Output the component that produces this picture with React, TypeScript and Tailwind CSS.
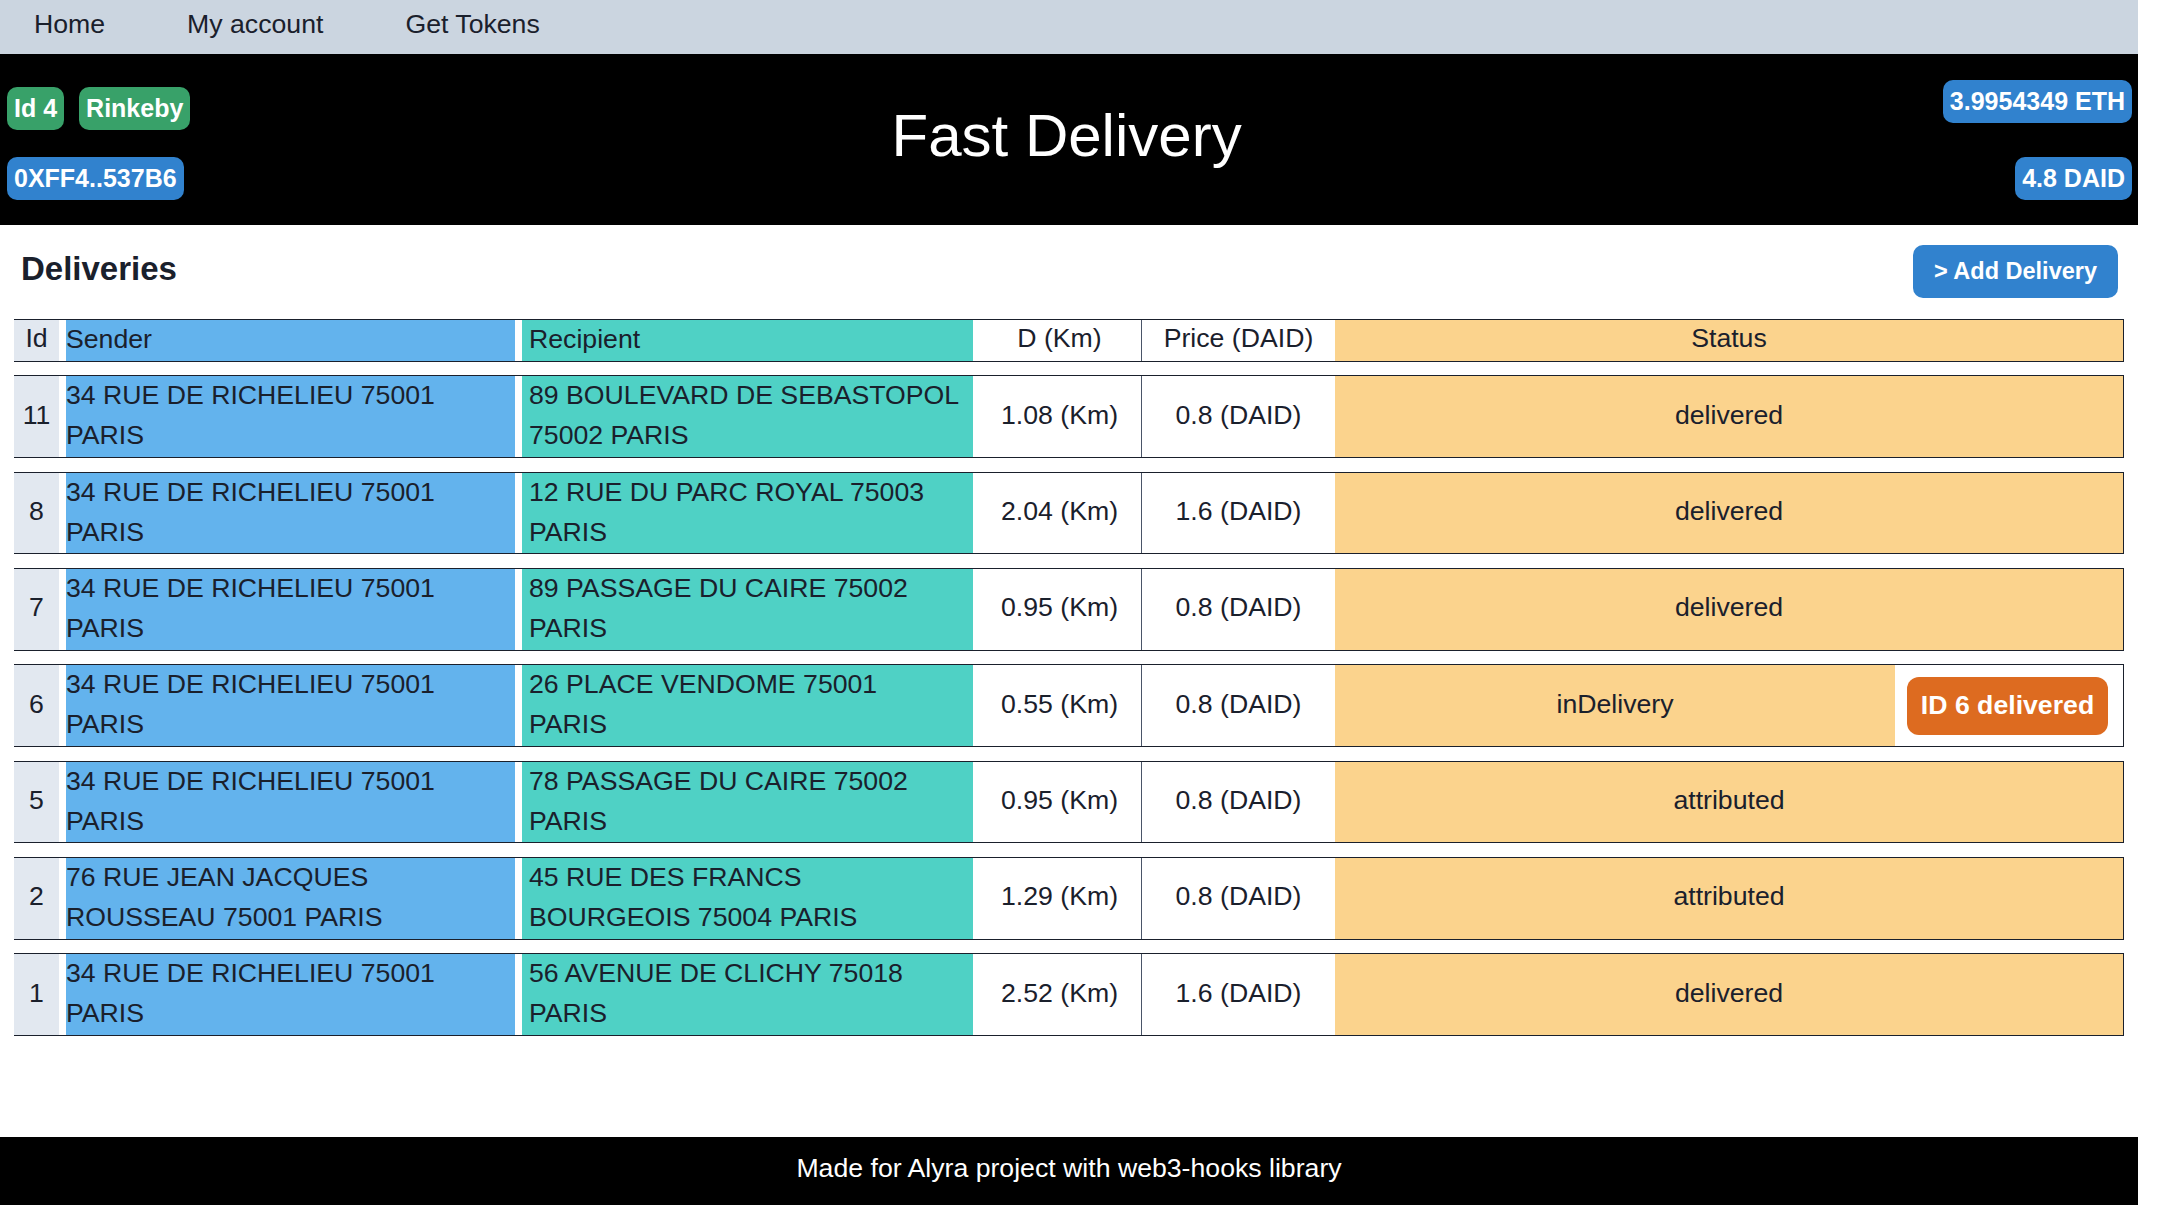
import React from 'react';

type Delivery = {
  id: number;
  sender: string[];
  recipient: string[];
  distance: string;
  price: string;
  status: string;
  action?: string;
};

const RICHELIEU = ['34 RUE DE RICHELIEU 75001', 'PARIS'];

const deliveries: Delivery[] = [
  { id: 11, sender: RICHELIEU, recipient: ['89 BOULEVARD DE SEBASTOPOL', '75002 PARIS'], distance: '1.08', price: '0.8', status: 'delivered' },
  { id: 8, sender: RICHELIEU, recipient: ['12 RUE DU PARC ROYAL 75003', 'PARIS'], distance: '2.04', price: '1.6', status: 'delivered' },
  { id: 7, sender: RICHELIEU, recipient: ['89 PASSAGE DU CAIRE 75002', 'PARIS'], distance: '0.95', price: '0.8', status: 'delivered' },
  { id: 6, sender: RICHELIEU, recipient: ['26 PLACE VENDOME 75001', 'PARIS'], distance: '0.55', price: '0.8', status: 'inDelivery', action: 'ID 6 delivered' },
  { id: 5, sender: RICHELIEU, recipient: ['78 PASSAGE DU CAIRE 75002', 'PARIS'], distance: '0.95', price: '0.8', status: 'attributed' },
  { id: 2, sender: ['76 RUE JEAN JACQUES', 'ROUSSEAU 75001 PARIS'], recipient: ['45 RUE DES FRANCS', 'BOURGEOIS 75004 PARIS'], distance: '1.29', price: '0.8', status: 'attributed' },
  { id: 1, sender: RICHELIEU, recipient: ['56 AVENUE DE CLICHY 75018', 'PARIS'], distance: '2.52', price: '1.6', status: 'delivered' },
];

const Badge = ({ children, color }: { children: React.ReactNode; color: 'green' | 'blue' }) => (
  <span
    className={
      'inline-flex h-[43px] items-center rounded-[10px] px-[7px] text-[25px] font-bold leading-none text-white ' +
      (color === 'green' ? 'bg-[#38a169]' : 'bg-[#3182ce]')
    }
  >
    {children}
  </span>
);

const Navbar = () => (
  <nav className="flex h-[54px] items-start gap-[82px] bg-[#cbd5e0] pl-[34px] pt-[4px] text-[26.67px] leading-[40px] text-[#1a202c]">
    <a href="#">Home</a>
    <a href="#">My account</a>
    <a href="#">Get Tokens</a>
  </nav>
);

const Header = () => (
  <header className="flex h-[171px] items-center justify-between bg-black pl-[7px] pr-[6px]">
    <div className="mt-[7px] flex flex-col gap-[27px]">
      <div className="flex gap-[15px]">
        <Badge color="green">Id 4</Badge>
        <Badge color="green">Rinkeby</Badge>
      </div>
      <div className="flex">
        <Badge color="blue">0XFF4..537B6</Badge>
      </div>
    </div>
    <h1 className="pb-[7px] text-[60px] leading-[72px] text-white">Fast Delivery</h1>
    <div className="flex flex-col items-end gap-[34px]">
      <Badge color="blue">3.9954349 ETH</Badge>
      <Badge color="blue">4.8 DAID</Badge>
    </div>
  </header>
);

const Lines = ({ lines }: { lines: string[] }) => (
  <>
    {lines.map((l, i) => (
      <div key={i} className="whitespace-nowrap">
        {l}
      </div>
    ))}
  </>
);

const Row = ({ d, header }: { d?: Delivery; header?: boolean }) => (
  <div
    className={
      'flex border-y border-r border-[#1a202c] ' + (header ? 'h-[42.67px]' : 'h-[82.67px]')
    }
  >
    <div className="flex w-[45px] shrink-0 items-center justify-center bg-[#e2e8f0] pb-[4px]">
      {header ? 'Id' : d!.id}
    </div>
    <div className="ml-[7px] w-[449px] shrink-0 bg-[#63b3ed]">
      <div className="-mt-px">{header ? 'Sender' : <Lines lines={d!.sender} />}</div>
    </div>
    <div className="ml-[7px] w-[451px] shrink-0 bg-[#4fd1c5] pl-[7px]">
      <div className="-mt-px">{header ? 'Recipient' : <Lines lines={d!.recipient} />}</div>
    </div>
    <div className="flex w-[168px] shrink-0 items-center justify-center pb-[4px] pl-[5px]">
      {header ? 'D (Km)' : `${d!.distance} (Km)`}
    </div>
    <div className="flex w-[194px] shrink-0 items-center justify-center border-l border-[#4a5568] pb-[4px]">
      {header ? 'Price (DAID)' : `${d!.price} (DAID)`}
    </div>
    <div className="flex flex-1 items-stretch">
      <div className="flex flex-1 items-center justify-center bg-[#fbd38d] pb-[4px]">
        {header ? 'Status' : d!.status}
      </div>
      {d?.action && (
        <div className="flex w-[228px] items-center justify-center pr-[3px]">
          <button className="flex h-[58px] items-center rounded-[12px] bg-[#dd6b20] px-[14px] text-[26.67px] font-bold leading-none text-white">
            {d.action}
          </button>
        </div>
      )}
    </div>
  </div>
);

export default function App() {
  return (
    <div
      className="flex h-[1205px] w-[2138px] flex-col bg-white text-[#1a202c]"
      style={{ fontFamily: '"Liberation Sans", Arial, sans-serif' }}
    >
      <Navbar />
      <Header />
      <main className="flex-1">
        <div className="flex items-center justify-between pl-[21px] pr-[20px] pt-[20px]">
          <h2 className="pb-[6px] text-[33px] font-bold leading-[40px]">Deliveries</h2>
          <button className="h-[53px] rounded-[10px] bg-[#3182ce] px-[21px] text-[23.5px] font-bold text-white">
            &gt; Add Delivery
          </button>
        </div>
        <div className="mx-[14px] mt-[21px] flex flex-col gap-[13.67px] text-[26.67px] leading-[40px]">
          <Row header />
          {deliveries.map((d) => (
            <Row key={d.id} d={d} />
          ))}
        </div>
      </main>
      <footer className="flex h-[68px] items-center justify-center bg-black pb-[6px] text-[26.67px] leading-[40px] text-white">
        Made for Alyra project with web3-hooks library
      </footer>
    </div>
  );
}
